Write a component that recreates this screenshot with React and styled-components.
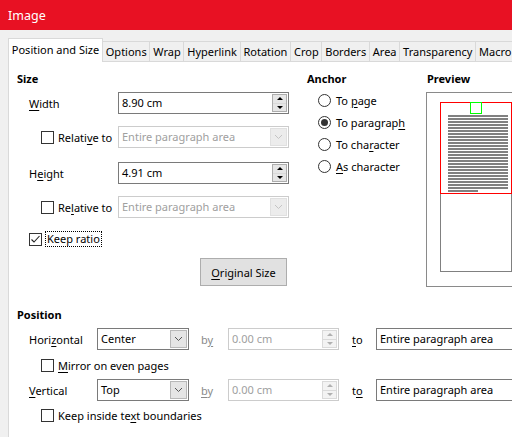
import React from 'react';
import styled, { createGlobalStyle } from 'styled-components';

const GlobalStyle = createGlobalStyle`
  html, body {
    margin: 0;
    padding: 0;
  }
  body {
    background: #f0f0f0;
    font-family: "Noto Sans", "Open Sans", sans-serif;
    font-size: 11px;
    color: #000;
  }
`;

const Window = styled.div`
  width: 512px;
  height: 437px;
  overflow: hidden;
  background: #f0f0f0;
`;

const TitleBar = styled.div`
  height: 30px;
  background: #e81123;
  color: #fff;
  font-size: 12.5px;
  display: flex;
  align-items: center;
  padding-left: 8px;
`;

const Body = styled.div`
  padding-top: 8px;
`;

const TabBar = styled.div`
  display: flex;
  align-items: flex-end;
  height: 23px;
  padding-left: 8px;
  white-space: nowrap;
`;

const Tab = styled.div`
  box-sizing: border-box;
  height: ${p => (p.$active ? 24 : 20)}px;
  margin-bottom: ${p => (p.$active ? -1 : 0)}px;
  margin-left: ${p => (p.$first ? 0 : -1)}px;
  padding: 0 2.8px;
  border: 1px solid #d9d9d9;
  border-bottom: none;
  background: ${p => (p.$active ? '#fff' : '#f0f0f0')};
  display: flex;
  align-items: center;
  padding-bottom: ${p => (p.$active ? 2 : 0)}px;
  position: relative;
  z-index: ${p => (p.$active ? 1 : 0)};
`;

const Panel = styled.div`
  margin-left: 8px;
  width: 600px;
  height: 380px;
  box-sizing: border-box;
  background: #fff;
  border-top: 1px solid #d9d9d9;
  border-left: 1px solid #d9d9d9;
  padding: 9px 0 0 8px;
`;

const TopArea = styled.div`
  display: flex;
  align-items: flex-start;
`;

const Heading = styled.div`
  font-weight: bold;
  height: 16px;
  line-height: 16px;
  padding-left: ${p => p.$indent || 0}px;
`;

const SizeSection = styled.div`
  width: 272px;
`;

const FieldRow = styled.div`
  display: grid;
  grid-template-columns: 101px 171px;
  align-items: center;
  height: 22px;
  margin-top: ${p => p.$mt}px;
`;

const LabelCell = styled.div`
  display: flex;
  align-items: center;
  gap: ${p => p.$gap ?? 4}px;
  padding-left: ${p => p.$indent}px;
  white-space: nowrap;
`;

const U = styled.span`
  text-decoration: underline;
  text-underline-offset: 2px;
`;

const Box = styled.span`
  box-sizing: border-box;
  width: 13px;
  height: 13px;
  border: 1px solid #333;
  background: #fff;
  display: inline-flex;
  align-items: center;
  justify-content: center;
  flex: none;
`;

const Focus = styled.span`
  border: 1px dotted #000;
  padding: 0 1px;
  line-height: 14px;
`;

const Field = styled.div`
  box-sizing: border-box;
  display: flex;
  width: ${p => p.$w}px;
  height: 22px;
  border: 1px solid ${p => (p.$disabled ? '#cccccc' : '#7a7a7a')};
  background: #fff;
  flex: none;
`;

const FieldText = styled.div`
  flex: 1;
  padding-left: 3px;
  line-height: 20px;
  color: ${p => (p.$disabled ? '#a0a0a0' : '#000')};
  white-space: nowrap;
  overflow: hidden;
`;

const SpinBox = styled.div`
  box-sizing: border-box;
  width: 15px;
  margin: 1px 1px 1px 0;
  display: flex;
  flex-direction: column;
  border: 1px solid ${p => (p.$disabled ? '#dadada' : '#adadad')};
`;

const SpinHalf = styled.div`
  flex: 1;
  display: flex;
  align-items: center;
  justify-content: center;
  background: ${p => (p.$disabled ? '#f3f3f3' : '#e6e6e6')};
  & + & {
    border-top: 1px solid ${p => (p.$disabled ? '#dadada' : '#adadad')};
  }
`;

const Arrow = styled.span`
  width: 0;
  height: 0;
  border-left: 3px solid transparent;
  border-right: 3px solid transparent;
  ${p => (p.$down ? 'border-top' : 'border-bottom')}: 3px solid ${p => (p.$disabled ? '#b0b0b0' : '#000')};
`;

const DropButton = styled.div`
  box-sizing: border-box;
  width: 17px;
  margin: 1px;
  display: flex;
  align-items: center;
  justify-content: center;
  background: ${p => (p.$disabled ? '#ececec' : '#e5e5e5')};
  border: 1px solid ${p => (p.$disabled ? '#e0e0e0' : '#b8b8b8')};
`;

const Button = styled.div`
  box-sizing: border-box;
  width: 87px;
  height: 28px;
  margin-left: 183px;
  margin-top: 8px;
  background: #e1e1e1;
  border: 1px solid #adadad;
  display: flex;
  align-items: center;
  justify-content: center;
`;

const AnchorSection = styled.div`
  width: 119px;
  margin-left: 18px;
`;

const RadioList = styled.div`
  margin-top: 2px;
`;

const RadioRow = styled.div`
  display: flex;
  align-items: center;
  gap: 5px;
  height: 22px;
  padding-left: 11px;
  white-space: nowrap;
`;

const RadioCircle = styled.span`
  box-sizing: border-box;
  width: 13px;
  height: 13px;
  border-radius: 50%;
  border: 1px solid #333;
  background: #fff;
  display: inline-flex;
  align-items: center;
  justify-content: center;
  flex: none;
  &::after {
    content: '';
    width: 7px;
    height: 7px;
    border-radius: 50%;
    background: ${p => (p.$checked ? '#333' : 'transparent')};
  }
`;

const PreviewSection = styled.div`
  width: 130px;
`;

const PreviewFrame = styled.div`
  box-sizing: border-box;
  margin-top: 5px;
  width: 120px;
  height: 195px;
  border: 1px solid #8a8a8a;
`;

const PositionSection = styled.div`
  margin-top: 20px;
`;

const PosRow = styled.div`
  display: flex;
  align-items: center;
  height: 22px;
  margin-top: ${p => p.$mt}px;
  white-space: nowrap;
`;

const PosLabel = styled.div`
  width: 68px;
  padding-left: 12px;
  flex: none;
`;

const SmallLabel = styled.div`
  width: ${p => p.$w}px;
  margin-left: ${p => p.$ml}px;
  color: ${p => (p.$disabled ? '#8a8a8a' : '#000')};
  flex: none;
`;

const CheckRow = styled.div`
  display: flex;
  align-items: center;
  gap: ${p => p.$gap ?? 4}px;
  height: 22px;
  padding-left: ${p => p.$indent}px;
  margin-top: ${p => p.$mt}px;
  white-space: nowrap;
`;

const Chevron = ({ disabled }) => (
  <svg width="9" height="6" viewBox="0 0 9 6">
    <polyline points="1,1 4.5,4.5 8,1" fill="none" stroke={disabled ? '#c4c4c4' : '#555'} strokeWidth="1" />
  </svg>
);

const Check = () => (
  <svg width="11" height="11" viewBox="0 0 11 11">
    <polyline points="1.5,5.5 4,8 9.5,2" fill="none" stroke="#222" strokeWidth="1.1" />
  </svg>
);

const Checkbox = ({ checked }) => <Box>{checked && <Check />}</Box>;

const Spin = ({ value, w, disabled }) => (
  <Field $w={w} $disabled={disabled}>
    <FieldText $disabled={disabled}>{value}</FieldText>
    <SpinBox $disabled={disabled}>
      <SpinHalf $disabled={disabled}><Arrow $disabled={disabled} /></SpinHalf>
      <SpinHalf $disabled={disabled}><Arrow $down $disabled={disabled} /></SpinHalf>
    </SpinBox>
  </Field>
);

const Select = ({ value, w, disabled, noButton }) => (
  <Field $w={w} $disabled={disabled}>
    <FieldText $disabled={disabled}>{value}</FieldText>
    {!noButton && (
      <DropButton $disabled={disabled}>
        <Chevron disabled={disabled} />
      </DropButton>
    )}
  </Field>
);

const PageDiagram = () => {
  const lines = [];
  for (let i = 0; i < 25; i++) {
    lines.push(<rect key={i} x="21" y={22 + i * 3} width="60" height="2" fill="#808080" />);
  }
  return (
    <svg width="118" height="193" viewBox="0 0 118 193">
      <rect x="13.5" y="9.5" width="71" height="169" fill="#fff" stroke="#808080" />
      {lines}
      <rect x="21" y="97" width="30" height="2" fill="#808080" />
      <rect x="13.5" y="9.5" width="71" height="91" fill="none" stroke="#ff0000" />
      <rect x="43.5" y="9.5" width="11" height="11" fill="none" stroke="#00ff00" />
    </svg>
  );
};

const tabs = ['Position and Size', 'Options', 'Wrap', 'Hyperlink', 'Rotation', 'Crop', 'Borders', 'Area', 'Transparency', 'Macro'];

export default function App() {
  return (
    <Window>
      <GlobalStyle />
      <TitleBar>Image</TitleBar>
      <Body>
        <TabBar>
          {tabs.map((t, i) => (
            <Tab key={t} $active={i === 0} $first={i === 0}>{t}</Tab>
          ))}
        </TabBar>
        <Panel>
          <TopArea>
            <SizeSection>
              <Heading>Size</Heading>
              <FieldRow $mt={5}>
                <LabelCell $indent={12}><span><U>W</U>idth</span></LabelCell>
                <Spin value="8.90 cm" w={171} />
              </FieldRow>
              <FieldRow $mt={12}>
                <LabelCell $indent={24}>
                  <Checkbox />
                  <span>Relati<U>v</U>e to</span>
                </LabelCell>
                <Select value="Entire paragraph area" w={171} disabled />
              </FieldRow>
              <FieldRow $mt={14}>
                <LabelCell $indent={12}><span>H<U>e</U>ight</span></LabelCell>
                <Spin value="4.91 cm" w={171} />
              </FieldRow>
              <FieldRow $mt={12}>
                <LabelCell $indent={24}>
                  <Checkbox />
                  <span>Re<U>l</U>ative to</span>
                </LabelCell>
                <Select value="Entire paragraph area" w={171} disabled />
              </FieldRow>
              <FieldRow $mt={10}>
                <LabelCell $indent={12} $gap={3}>
                  <Checkbox checked />
                  <Focus>Keep ratio</Focus>
                </LabelCell>
              </FieldRow>
              <Button><span><U>O</U>riginal Size</span></Button>
            </SizeSection>

            <AnchorSection>
              <Heading>Anchor</Heading>
              <RadioList>
                <RadioRow><RadioCircle /><span>To <U>p</U>age</span></RadioRow>
                <RadioRow><RadioCircle $checked /><span>To paragrap<U>h</U></span></RadioRow>
                <RadioRow><RadioCircle /><span>To cha<U>r</U>acter</span></RadioRow>
                <RadioRow><RadioCircle /><span><U>A</U>s character</span></RadioRow>
              </RadioList>
            </AnchorSection>

            <PreviewSection>
              <Heading $indent={1}>Preview</Heading>
              <PreviewFrame>
                <PageDiagram />
              </PreviewFrame>
            </PreviewSection>
          </TopArea>

          <PositionSection>
            <Heading>Position</Heading>
            <PosRow $mt={5}>
              <PosLabel>Hori<U>z</U>ontal</PosLabel>
              <Select value="Center" w={92} />
              <SmallLabel $w={27} $ml={12} $disabled>b<U>y</U></SmallLabel>
              <Spin value="0.00 cm" w={111} disabled />
              <SmallLabel $w={24} $ml={13}><U>t</U>o</SmallLabel>
              <Select value="Entire paragraph area" w={160} noButton />
            </PosRow>
            <CheckRow $indent={24} $mt={4}>
              <Checkbox />
              <span><U>M</U>irror on even pages</span>
            </CheckRow>
            <PosRow $mt={3}>
              <PosLabel><U>V</U>ertical</PosLabel>
              <Select value="Top" w={92} />
              <SmallLabel $w={27} $ml={12} $disabled><U>b</U>y</SmallLabel>
              <Spin value="0.00 cm" w={111} disabled />
              <SmallLabel $w={24} $ml={13}>t<U>o</U></SmallLabel>
              <Select value="Entire paragraph area" w={160} noButton />
            </PosRow>
            <CheckRow $indent={24} $mt={3}>
              <Checkbox />
              <span>Keep inside te<U>x</U>t boundaries</span>
            </CheckRow>
          </PositionSection>
        </Panel>
      </Body>
    </Window>
  );
}
